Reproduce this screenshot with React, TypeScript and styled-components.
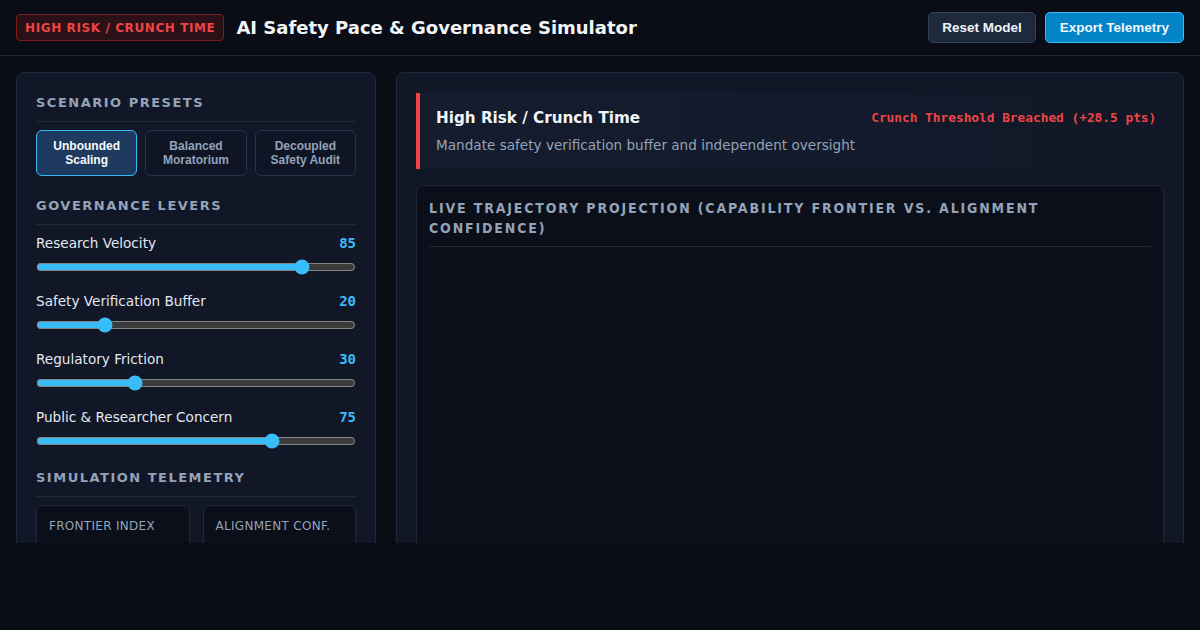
import React, { useState } from 'react';
import styled, { createGlobalStyle } from 'styled-components';

const GlobalStyle = createGlobalStyle`
  html, body {
    margin: 0;
    padding: 0;
    background: #0a0d16;
    color: #e2e8f0;
    font-family: 'DejaVu Sans', 'Noto Sans', sans-serif;
  }
  * { box-sizing: border-box; }
`;

const Shell = styled.div`
  width: 1200px;
  height: 630px;
  background: #0a0d16;
  overflow: hidden;
`;

const Header = styled.header`
  height: 56px;
  display: flex;
  align-items: center;
  justify-content: space-between;
  padding: 0 16px;
  border-bottom: 1px solid #1e2533;
`;

const Brand = styled.div`
  display: flex;
  align-items: center;
  gap: 12px;
`;

const RiskBadge = styled.span`
  display: inline-flex;
  align-items: center;
  height: 27px;
  padding: 0 8px;
  border: 1px solid #7f1d1d;
  border-radius: 4px;
  background: #2a1118;
  color: #ef4444;
  font-size: 12px;
  font-weight: 700;
  letter-spacing: 0.6px;
  text-transform: uppercase;
`;

const Title = styled.h1`
  margin: 0;
  font-size: 18px;
  font-weight: 700;
  color: #f1f5f9;
`;

const Actions = styled.div`
  display: flex;
  gap: 9px;
`;

const HeaderButton = styled.button<{ $primary?: boolean }>`
  height: 31px;
  padding: 0 ${p => (p.$primary ? 14 : 13)}px;
  border-radius: 5px;
  border: 1px solid ${p => (p.$primary ? '#38bdf8' : '#334155')};
  background: ${p => (p.$primary ? '#0284c7' : '#1e293b')};
  color: #f1f5f9;
  font-family: 'Liberation Sans', Arial, sans-serif;
  font-size: 13.5px;
  font-weight: 700;
  cursor: pointer;
`;

const Main = styled.main`
  height: 487px;
  overflow: hidden;
  display: grid;
  grid-template-columns: 360px minmax(0, 1fr);
  gap: 20px;
  padding: 16px 16px 0;
`;

const Panel = styled.section<{ $top: number }>`
  background: #111726;
  border: 1px solid #1e293b;
  border-radius: 8px;
  padding: ${p => p.$top}px 19px 20px;
  min-height: 600px;
`;

const SectionTitle = styled.h2`
  margin: 0 0 8px;
  padding-bottom: 10px;
  border-bottom: 1px solid #1f2a3b;
  font-size: 13px;
  line-height: 16px;
  font-weight: 700;
  letter-spacing: 1.5px;
  text-transform: uppercase;
  color: #94a3b8;
`;

const PresetRow = styled.div`
  display: grid;
  grid-template-columns: repeat(3, 1fr);
  gap: 8px;
  margin-bottom: 22px;
`;

const PresetButton = styled.button<{ $active?: boolean }>`
  height: 46px;
  padding: 0 6px;
  border-radius: 6px;
  border: 1px solid ${p => (p.$active ? '#38bdf8' : '#263245')};
  background: ${p => (p.$active ? '#1e3a5f' : '#0f1524')};
  color: ${p => (p.$active ? '#f8fafc' : '#94a3b8')};
  font-family: 'Liberation Sans', Arial, sans-serif;
  font-size: 12px;
  font-weight: 700;
  line-height: 14px;
  cursor: pointer;
`;

const Lever = styled.div`
  margin-top: 10px;
  margin-bottom: 18px;
`;

const LeverHead = styled.div`
  display: flex;
  justify-content: space-between;
  align-items: center;
  font-size: 13.6px;
  color: #e2e8f0;
`;

const LeverValue = styled.span`
  font-family: 'DejaVu Sans Mono', monospace;
  font-size: 14px;
  font-weight: 700;
  color: #38bdf8;
`;

const Range = styled.input`
  display: block;
  width: 100%;
  margin: 8px 0 0;
  accent-color: #38bdf8;
  color-scheme: dark;
`;

const TelemetryTitle = styled(SectionTitle)`
  margin-top: 21px;
`;

const StatGrid = styled.div`
  display: grid;
  grid-template-columns: 1fr 1fr;
  gap: 13px;
`;

const StatCard = styled.div`
  background: #0b0f19;
  border: 1px solid #1e293b;
  border-radius: 6px;
  padding: 13px 12px;
  height: 90px;
`;

const StatLabel = styled.div`
  font-size: 12px;
  letter-spacing: 0.3px;
  color: #94a3b8;
`;

const Alert = styled.div`
  display: flex;
  justify-content: space-between;
  align-items: flex-start;
  gap: 16px;
  border-left: 4px solid #ef4444;
  background: linear-gradient(90deg, #141c2e 0%, #121a2b 60%, #111726 100%);
  padding: 16px 15px 0 16px;
  height: 76px;
  margin-bottom: 16px;
`;

const AlertTitle = styled.div`
  font-size: 15.2px;
  font-weight: 700;
  color: #f1f5f9;
`;

const AlertText = styled.div`
  margin-top: 10px;
  font-size: 13.6px;
  color: #94a3b8;
  white-space: nowrap;
`;

const AlertStatus = styled.div`
  margin: 1px 8px 0 0;
  font-family: 'DejaVu Sans Mono', monospace;
  font-size: 12.8px;
  font-weight: 700;
  color: #ef4444;
  white-space: nowrap;
`;

const ChartBox = styled.div`
  background: #0b0f19;
  border: 1px solid #1e293b;
  border-radius: 8px;
  padding: 12px 12px;
  height: 420px;
`;

const ChartTitle = styled.h3`
  margin: 0;
  padding-bottom: 8px;
  border-bottom: 1px solid #1f2a3b;
  font-family: 'DejaVu Sans Condensed', 'DejaVu Sans', sans-serif;
  font-size: 14px;
  font-weight: 700;
  line-height: 20px;
  letter-spacing: 1.85px;
  text-transform: uppercase;
  color: #94a3b8;
`;

const levers = [
  { label: 'Research Velocity', value: 85 },
  { label: 'Safety Verification Buffer', value: 20 },
  { label: 'Regulatory Friction', value: 30 },
  { label: 'Public & Researcher Concern', value: 75 },
];

export default function App() {
  const [values, setValues] = useState(levers.map(l => l.value));

  return (
    <Shell>
      <GlobalStyle />
      <Header>
        <Brand>
          <RiskBadge>High Risk / Crunch Time</RiskBadge>
          <Title>AI Safety Pace &amp; Governance Simulator</Title>
        </Brand>
        <Actions>
          <HeaderButton>Reset Model</HeaderButton>
          <HeaderButton $primary>Export Telemetry</HeaderButton>
        </Actions>
      </Header>
      <Main>
        <Panel $top={22}>
          <SectionTitle>Scenario Presets</SectionTitle>
          <PresetRow>
            <PresetButton $active>Unbounded<br />Scaling</PresetButton>
            <PresetButton>Balanced<br />Moratorium</PresetButton>
            <PresetButton>Decoupled<br />Safety Audit</PresetButton>
          </PresetRow>
          <SectionTitle>Governance Levers</SectionTitle>
          {levers.map((l, i) => (
            <Lever key={l.label}>
              <LeverHead>
                <span>{l.label}</span>
                <LeverValue>{values[i]}</LeverValue>
              </LeverHead>
              <Range
                type="range"
                min={0}
                max={100}
                value={values[i]}
                onChange={e => {
                  const next = [...values];
                  next[i] = Number(e.target.value);
                  setValues(next);
                }}
              />
            </Lever>
          ))}
          <TelemetryTitle>Simulation Telemetry</TelemetryTitle>
          <StatGrid>
            <StatCard><StatLabel>FRONTIER INDEX</StatLabel></StatCard>
            <StatCard><StatLabel>ALIGNMENT CONF.</StatLabel></StatCard>
          </StatGrid>
        </Panel>
        <Panel $top={20}>
          <Alert>
            <div>
              <AlertTitle>High Risk / Crunch Time</AlertTitle>
              <AlertText>Mandate safety verification buffer and independent oversight</AlertText>
            </div>
            <AlertStatus>Crunch Threshold Breached (+28.5 pts)</AlertStatus>
          </Alert>
          <ChartBox>
            <ChartTitle>Live Trajectory Projection (Capability Frontier vs. Alignment Confidence)</ChartTitle>
          </ChartBox>
        </Panel>
      </Main>
    </Shell>
  );
}
